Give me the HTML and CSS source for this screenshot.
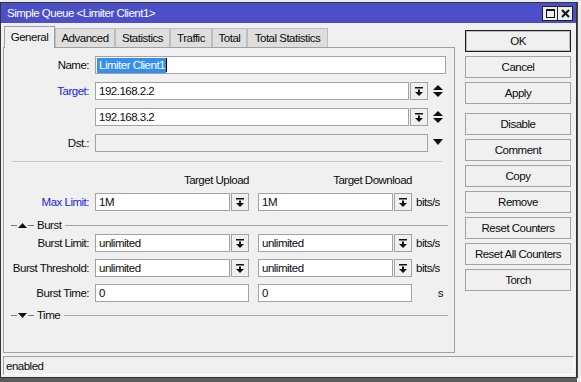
FILE: index.html
```html
<!DOCTYPE html>
<html>
<head>
<meta charset="utf-8">
<link rel="stylesheet" href="styles.css">
</head>
<body>
<div class="window">
  <div class="titlebar">
    <span class="title">Simple Queue &lt;Limiter Client1&gt;</span>
    <div class="wbtns">
      <span class="wbtn"><svg width="9" height="9" viewBox="0 0 9 9"><rect x="0.5" y="0.5" width="8" height="8" fill="none" stroke="#111"/><rect x="0" y="0" width="9" height="2" fill="#111"/></svg></span>
      <span class="wbtn"><svg width="9" height="9" viewBox="0 0 9 9"><path d="M1,1 L8,8 M8,1 L1,8" stroke="#111" stroke-width="2"/></svg></span>
    </div>
  </div>
  <div class="content">
    <div class="main">
      <div class="left">
        <div class="tabs">
          <div class="tab active t-general">General</div>
          <div class="tab t-advanced">Advanced</div>
          <div class="tab t-statistics">Statistics</div>
          <div class="tab t-traffic">Traffic</div>
          <div class="tab t-total">Total</div>
          <div class="tab t-totalstat">Total Statistics</div>
        </div>
        <div class="panel">
          <div class="rows">
            <div class="row">
              <div class="lbl">Name:</div>
              <div class="inp inp-name"><span class="sel">Limiter Client1</span><span class="caret"></span></div>
            </div>
            <div class="row">
              <div class="lbl blue">Target:</div>
              <div class="combo wide">
                <div class="inp">192.168.2.2</div>
                <div class="dd"><svg width="8" height="9" viewBox="0 0 8 9"><rect x="0" y="0" width="8" height="1.5" fill="#111"/><rect x="3" y="2.5" width="2" height="3" fill="#111"/><polygon points="0,5 8,5 4,9" fill="#111"/></svg></div>
              </div>
              <svg class="updown" width="10" height="12" viewBox="0 0 10 12"><polygon points="5,0 10,5 0,5" fill="#111"/><polygon points="0,7 10,7 5,12" fill="#111"/></svg>
            </div>
            <div class="row">
              <div class="lbl"></div>
              <div class="combo wide">
                <div class="inp">192.168.3.2</div>
                <div class="dd"><svg width="8" height="9" viewBox="0 0 8 9"><rect x="0" y="0" width="8" height="1.5" fill="#111"/><rect x="3" y="2.5" width="2" height="3" fill="#111"/><polygon points="0,5 8,5 4,9" fill="#111"/></svg></div>
              </div>
              <svg class="updown" width="10" height="12" viewBox="0 0 10 12"><polygon points="5,0 10,5 0,5" fill="#111"/><polygon points="0,7 10,7 5,12" fill="#111"/></svg>
            </div>
            <div class="row">
              <div class="lbl">Dst.:</div>
              <div class="inp inp-dst"></div>
              <svg class="down" width="10" height="6" viewBox="0 0 10 6"><polygon points="0,0 10,0 5,6" fill="#111"/></svg>
            </div>
          </div>

          <div class="sep"></div>

          <div class="row head">
            <div class="lbl"></div>
            <div class="col">Target Upload</div>
            <div class="col col2">Target Download</div>
          </div>

          <div class="row r-max">
            <div class="lbl blue">Max Limit:</div>
            <div class="col combo">
              <div class="inp">1M</div>
              <div class="dd"><svg width="8" height="9" viewBox="0 0 8 9"><rect x="0" y="0" width="8" height="1.5" fill="#111"/><rect x="3" y="2.5" width="2" height="3" fill="#111"/><polygon points="0,5 8,5 4,9" fill="#111"/></svg></div>
            </div>
            <div class="col col2 combo">
              <div class="inp">1M</div>
              <div class="dd"><svg width="8" height="9" viewBox="0 0 8 9"><rect x="0" y="0" width="8" height="1.5" fill="#111"/><rect x="3" y="2.5" width="2" height="3" fill="#111"/><polygon points="0,5 8,5 4,9" fill="#111"/></svg></div>
            </div>
            <div class="unit">bits/s</div>
          </div>

          <div class="sect sect-burst">
            <span class="dash"></span>
            <svg width="9" height="5" viewBox="0 0 9 5"><polygon points="0,5 9,5 4.5,0" fill="#111"/></svg>
            <span class="dash"></span>
            <span class="sect-title">Burst</span>
            <span class="sect-line"></span>
          </div>

          <div class="row r-bl">
            <div class="lbl">Burst Limit:</div>
            <div class="col combo">
              <div class="inp">unlimited</div>
              <div class="dd"><svg width="8" height="9" viewBox="0 0 8 9"><rect x="0" y="0" width="8" height="1.5" fill="#111"/><rect x="3" y="2.5" width="2" height="3" fill="#111"/><polygon points="0,5 8,5 4,9" fill="#111"/></svg></div>
            </div>
            <div class="col col2 combo">
              <div class="inp">unlimited</div>
              <div class="dd"><svg width="8" height="9" viewBox="0 0 8 9"><rect x="0" y="0" width="8" height="1.5" fill="#111"/><rect x="3" y="2.5" width="2" height="3" fill="#111"/><polygon points="0,5 8,5 4,9" fill="#111"/></svg></div>
            </div>
            <div class="unit">bits/s</div>
          </div>

          <div class="row r-next">
            <div class="lbl">Burst Threshold:</div>
            <div class="col combo">
              <div class="inp">unlimited</div>
              <div class="dd"><svg width="8" height="9" viewBox="0 0 8 9"><rect x="0" y="0" width="8" height="1.5" fill="#111"/><rect x="3" y="2.5" width="2" height="3" fill="#111"/><polygon points="0,5 8,5 4,9" fill="#111"/></svg></div>
            </div>
            <div class="col col2 combo">
              <div class="inp">unlimited</div>
              <div class="dd"><svg width="8" height="9" viewBox="0 0 8 9"><rect x="0" y="0" width="8" height="1.5" fill="#111"/><rect x="3" y="2.5" width="2" height="3" fill="#111"/><polygon points="0,5 8,5 4,9" fill="#111"/></svg></div>
            </div>
            <div class="unit">bits/s</div>
          </div>

          <div class="row r-next">
            <div class="lbl">Burst Time:</div>
            <div class="col inp">0</div>
            <div class="col col2 inp">0</div>
            <div class="unit unit-r">s</div>
          </div>

          <div class="sect sect-time">
            <span class="dash"></span>
            <svg width="9" height="5" viewBox="0 0 9 5"><polygon points="0,0 9,0 4.5,5" fill="#111"/></svg>
            <span class="dash"></span>
            <span class="sect-title">Time</span>
            <span class="sect-line"></span>
          </div>
        </div>
      </div>
      <div class="actions">
        <div class="btn btn-default">OK</div>
        <div class="btn">Cancel</div>
        <div class="btn">Apply</div>
        <div class="btn btn-gap">Disable</div>
        <div class="btn">Comment</div>
        <div class="btn">Copy</div>
        <div class="btn">Remove</div>
        <div class="btn">Reset Counters</div>
        <div class="btn">Reset All Counters</div>
        <div class="btn">Torch</div>
      </div>
    </div>
    <div class="status">enabled</div>
  </div>
</div>
</body>
</html>
```

FILE: styles.css
```css
* { box-sizing: border-box; }

html, body {
  margin: 0;
  height: 382px;
  overflow: hidden;
}

body {
  background: #ececec;
  font-family: "Liberation Sans", Arial, sans-serif;
  font-size: 11.5px;
  letter-spacing: -0.5px;
  color: #0c0c0c;
}

.window {
  width: 577px;
  height: 376px;
  margin-top: 2px;
  border: 1px solid #353535;
  background: #f0f0f0;
  box-shadow: 1px 0 0 #444, 0 5px 0 #5c5c5c;
}

.titlebar {
  height: 20px;
  background: #4b50c9;
  color: #fff;
  display: flex;
  align-items: center;
  justify-content: space-between;
  padding: 0 3px 0 6px;
}

.wbtns { display: flex; }

.wbtn {
  width: 16px;
  height: 15px;
  border: 1px solid #202020;
  background: #eeeeee;
  display: flex;
  align-items: center;
  justify-content: center;
}
.wbtn + .wbtn { margin-left: -1px; }

.content {
  padding: 3px 2px 2px 2px;
}

.main {
  display: flex;
  gap: 10px;
  height: 327px;
}

.left { width: 452px; }

.tabs {
  display: flex;
  height: 21px;
  align-items: flex-end;
  padding-left: 1px;
}

.tab {
  height: 19px;
  background: #dedede;
  border: 1px solid #bdbdbd;
  border-bottom: none;
  display: flex;
  align-items: center;
  justify-content: center;
  white-space: nowrap;
}

.t-general { width: 51px; }
.t-advanced { width: 60px; }
.t-statistics { width: 55px; }
.t-traffic { width: 42px; }
.t-total { width: 35px; }
.t-totalstat { width: 81px; }

.tab.active {
  height: 22px;
  margin-bottom: -1px;
  background: #f0f0f0;
  border-color: #a0a0a0;
  padding-bottom: 2px;
  position: relative;
  z-index: 1;
}

.panel {
  height: 306px;
  border: 1px solid #a0a0a0;
  padding: 8px 6px 0 0;
}

.rows {
  display: flex;
  flex-direction: column;
  gap: 8px;
}

.row {
  display: flex;
  align-items: center;
  height: 18px;
}

.lbl {
  width: 85px;
  margin-right: 6px;
  text-align: right;
  white-space: nowrap;
}

.blue { color: #2323dc; }

.inp {
  height: 18px;
  border: 1px solid #a2a2a2;
  background: #fff;
  padding-left: 3px;
  display: flex;
  align-items: center;
  white-space: nowrap;
  overflow: hidden;
}

.inp-name {
  width: 351px;
  padding-left: 1px;
}

.sel {
  background: #3390f0;
  color: #fff;
  line-height: 15px;
  padding: 0 1px 0 2px;
}

.caret {
  width: 1px;
  height: 14px;
  background: #000;
}

.inp-dst {
  width: 333px;
  background: #f0f0f0;
}

.combo {
  display: flex;
  gap: 1px;
}

.combo .inp { flex: 1; }

.combo.wide { width: 333px; }

.dd {
  width: 18px;
  height: 18px;
  border: 1px solid #a2a2a2;
  background: #f0f0f0;
  display: flex;
  align-items: center;
  justify-content: center;
  flex: none;
}

.updown { margin-left: 5px; }
.down { margin-left: 5px; margin-top: -3px; }

.sep {
  margin: 9px 6px 0 8px;
  border-top: 1px solid #c6c6c6;
}

.col {
  width: 154px;
  flex: none;
}

.col2 { margin-left: 9px; }

.head {
  height: 16px;
  margin-top: 10px;
}

.head .col { text-align: right; }

.r-max { margin-top: 5px; }
.r-bl { margin-top: 2px; }
.r-next { margin-top: 7px; }

.unit {
  width: 28px;
  margin-left: 4px;
  white-space: nowrap;
}

.unit-r {
  text-align: right;
  padding-right: 1px;
}

.sect {
  display: flex;
  align-items: center;
  height: 14px;
  padding-left: 7px;
}

.sect-burst { margin-top: 7px; }
.sect-time { margin-top: 6px; }

.dash {
  width: 6px;
  border-top: 1px solid #7a7a7a;
}

.sect svg { margin: 0 1px; }

.sect-title { margin-left: 3px; }

.sect-line {
  flex: 1;
  margin-left: 4px;
  border-top: 1px solid #a8a8a8;
}

.actions {
  width: 106px;
  margin-top: 4px;
  display: flex;
  flex-direction: column;
  gap: 4px;
}

.btn {
  height: 22px;
  border: 1px solid #a3a3a3;
  background: #f0f0f0;
  display: flex;
  align-items: center;
  justify-content: center;
  white-space: nowrap;
}

.btn-default {
  border-color: #1e1e1e;
  box-shadow: inset 0 0 0 1px #bdbdbd;
}

.btn-gap { margin-top: 5px; }

.status {
  margin-top: 3px;
  height: 19px;
  border-top: 1px solid #a0a0a0;
  border-left: 1px solid #a0a0a0;
  border-right: 1px solid #fff;
  border-bottom: 1px solid #fff;
  padding-left: 2px;
  display: flex;
  align-items: center;
}
```
